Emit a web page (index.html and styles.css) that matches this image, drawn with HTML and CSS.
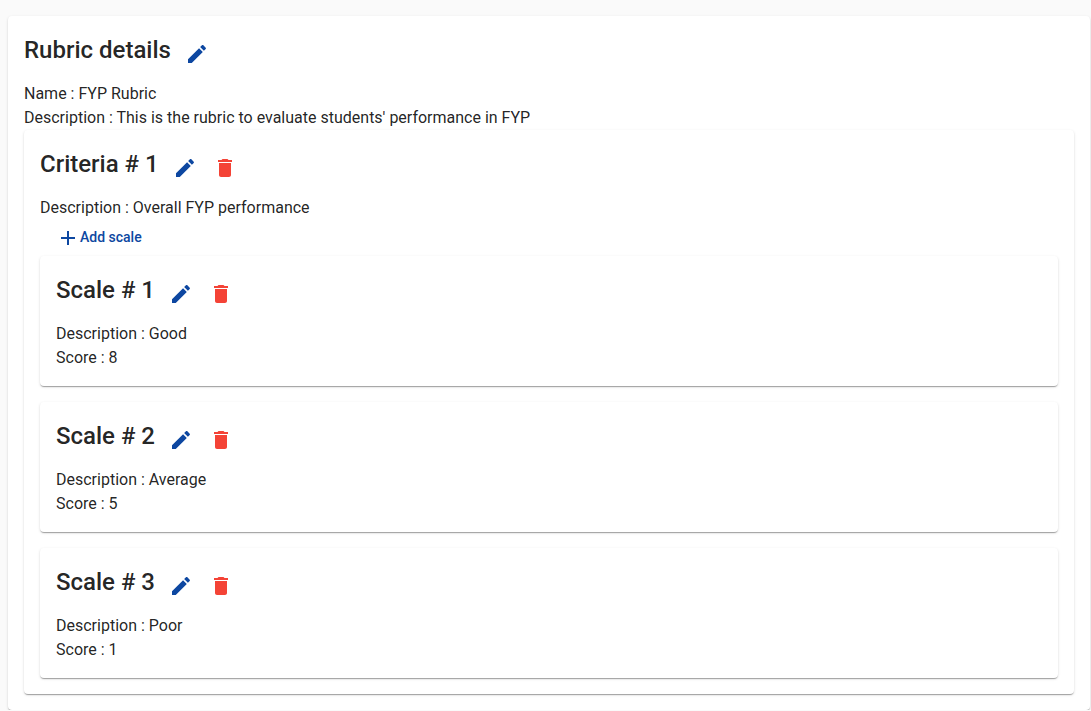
FILE: index.html
```html
<!DOCTYPE html>
<html lang="en">
<head>
<meta charset="utf-8">
<title>Rubric details</title>
<link rel="stylesheet" href="styles.css">
</head>
<body>
<svg class="sprite" aria-hidden="true">
<symbol id="edit" viewBox="0 0 24 24"><path d="M3 17.25V21h3.75L17.81 9.94l-3.75-3.75L3 17.25zM20.71 7.04c.39-.39.39-1.02 0-1.41l-2.34-2.34c-.39-.39-1.02-.39-1.41 0l-1.83 1.83 3.75 3.75 1.83-1.83z"/></symbol>
<symbol id="delete" viewBox="0 0 24 24"><path d="M6 19c0 1.1.9 2 2 2h8c1.1 0 2-.9 2-2V7H6v12zM19 4h-3.5l-1-1h-5l-1 1H5v2h14V4z"/></symbol>
<symbol id="add" viewBox="0 0 24 24"><path d="M19 13h-6v6h-2v-6H5v-2h6V5h2v6h6v2z"/></symbol>
</svg>
<main class="card">
  <header class="card-header">
    <h1 class="title">Rubric details</h1>
    <button class="icon-button" type="button" aria-label="Edit rubric"><svg class="icon"><use href="#edit"/></svg></button>
  </header>
  <p class="line">Name : FYP Rubric</p>
  <p class="line">Description : This is the rubric to evaluate students' performance in FYP</p>
  <section class="card">
    <header class="card-header">
      <h2 class="title">Criteria # 1</h2>
      <button class="icon-button" type="button" aria-label="Edit criteria"><svg class="icon"><use href="#edit"/></svg></button>
      <button class="icon-button warn" type="button" aria-label="Delete criteria"><svg class="icon"><use href="#delete"/></svg></button>
    </header>
    <p class="line">Description : Overall FYP performance</p>
    <button class="add-button" type="button"><svg class="icon"><use href="#add"/></svg><span class="add-label">Add scale</span></button>
    <div class="scales">
      <article class="card">
        <header class="card-header">
          <h3 class="title">Scale # 1</h3>
          <button class="icon-button" type="button" aria-label="Edit scale 1"><svg class="icon"><use href="#edit"/></svg></button>
          <button class="icon-button warn" type="button" aria-label="Delete scale 1"><svg class="icon"><use href="#delete"/></svg></button>
        </header>
        <p class="line">Description : Good</p>
        <p class="line">Score : 8</p>
      </article>
      <article class="card">
        <header class="card-header">
          <h3 class="title">Scale # 2</h3>
          <button class="icon-button" type="button" aria-label="Edit scale 2"><svg class="icon"><use href="#edit"/></svg></button>
          <button class="icon-button warn" type="button" aria-label="Delete scale 2"><svg class="icon"><use href="#delete"/></svg></button>
        </header>
        <p class="line">Description : Average</p>
        <p class="line">Score : 5</p>
      </article>
      <article class="card">
        <header class="card-header">
          <h3 class="title">Scale # 3</h3>
          <button class="icon-button" type="button" aria-label="Edit scale 3"><svg class="icon"><use href="#edit"/></svg></button>
          <button class="icon-button warn" type="button" aria-label="Delete scale 3"><svg class="icon"><use href="#delete"/></svg></button>
        </header>
        <p class="line">Description : Poor</p>
        <p class="line">Score : 1</p>
      </article>
    </div>
  </section>
</main>
</body>
</html>
```
FILE: styles.css
```css
* { box-sizing: border-box; }
body {
  margin: 0;
  padding: 16px 1px 0 8px;
  background: #fafafa;
  color: rgba(0, 0, 0, 0.87);
  font: 400 16px/24px Roboto, sans-serif;
}
.sprite { display: none; }
.card {
  padding: 16px;
  background: #fff;
  border-radius: 4px;
  box-shadow: 0 2px 1px -1px rgba(0, 0, 0, 0.2), 0 1px 1px 0 rgba(0, 0, 0, 0.14), 0 1px 3px 0 rgba(0, 0, 0, 0.12);
}
.card-header {
  display: flex;
  align-items: center;
  height: 40px;
  margin-bottom: 10px;
}
.title {
  margin: 0 6px 4px 0;
  font-size: 24px;
  font-weight: 500;
  line-height: 32px;
}
.line { margin: 0; }
.icon-button {
  display: flex;
  align-items: center;
  justify-content: center;
  width: 40px;
  height: 40px;
  padding: 4px 0 0;
  border: 0;
  border-radius: 50%;
  background: none;
  color: #0d47a1;
  cursor: pointer;
}
.warn { color: #f44336; }
.icon {
  width: 24px;
  height: 24px;
  fill: currentColor;
}
.add-button {
  display: flex;
  align-items: center;
  height: 36px;
  padding: 0 16px;
  border: 0;
  border-radius: 4px;
  background: none;
  color: #0d47a1;
  font: 500 14px/24px Roboto, sans-serif;
  cursor: pointer;
}
.add-label { padding-bottom: 2px; }
.scales {
  display: flex;
  flex-direction: column;
  gap: 16px;
}
```
